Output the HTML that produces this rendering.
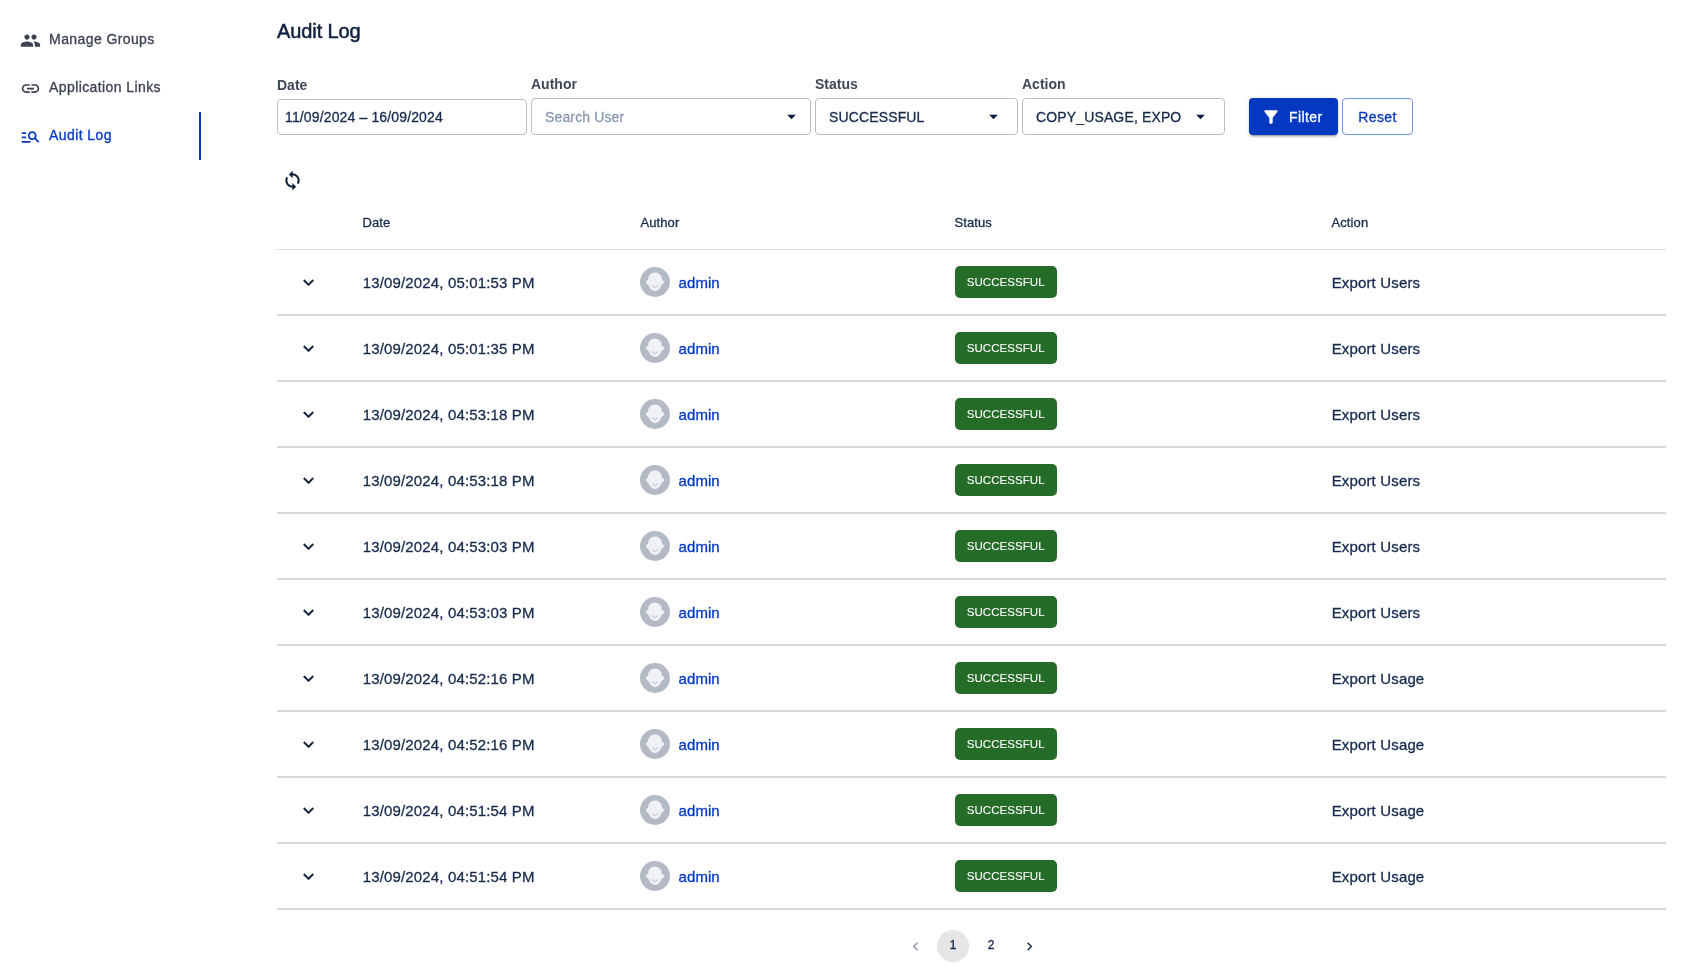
<!DOCTYPE html>
<html lang="en">
<head>
<meta charset="utf-8">
<title>Audit Log</title>
<meta name="viewport" content="width=1690, initial-scale=1">
<style>
*{box-sizing:border-box;margin:0;padding:0}
html,body{width:1690px;height:975px;overflow:hidden;background:#fff}
body{position:relative;will-change:transform;-webkit-text-stroke:.3px currentColor;font-family:"Liberation Sans",Arial,Helvetica,sans-serif;color:#172b4d;font-size:14px;-webkit-font-smoothing:antialiased}
svg{display:block;fill:currentColor}
button{font-family:inherit;border:0;background:none;color:inherit;cursor:pointer}
a{text-decoration:none;cursor:pointer}

/* sidebar */
.side{position:absolute;left:0;top:16px;width:201px;height:144px}
.side ul{list-style:none}
.side li{position:relative;height:48px;display:flex;align-items:center;padding-left:19.5px;font-size:14px;letter-spacing:.4px;color:#3a4250;white-space:nowrap}
.side li svg{width:21px;height:21px;margin-right:8.6px;flex:none;position:relative;top:.5px}
.side li span{position:relative;top:-1px;-webkit-text-stroke:.3px currentColor}
.side li.on{color:#0438c0}
.side li.on::after{content:"";position:absolute;right:0;top:0;width:2px;height:48px;background:#0438c0}

/* title */
h1{position:absolute;left:277px;top:18px;font-size:20px;line-height:26px;font-weight:400;color:#0f2040;white-space:nowrap;-webkit-text-stroke:.5px currentColor;letter-spacing:-.1px}

/* filters */
.f{position:absolute}
.f label{position:absolute;left:0;-webkit-text-stroke:0;font-weight:700;font-size:14px;line-height:16px;color:#3f4759;white-space:nowrap}
.box{position:absolute;left:0;border:1px solid #bcbcbc;border-radius:4px;background:#fff;display:flex;align-items:center;font-size:14px;letter-spacing:.14px;color:#172b4d;white-space:nowrap;overflow:hidden}
.box .arr{position:absolute;width:21px;height:21px;top:50%;margin-top:-10.5px;color:#0b1c3c}
.ph{color:#8a99b0}
.btn{position:absolute;top:98px;height:37px;border-radius:4px;font-size:14px;letter-spacing:.4px;-webkit-text-stroke:.3px currentColor;display:flex;align-items:center;white-space:nowrap}
.btn.pri{left:1249px;width:89px;background:#0438c0;color:#fff;padding-left:12px;box-shadow:0 3px 1px -2px rgba(0,0,0,.2),0 2px 2px 0 rgba(0,0,0,.14),0 1px 5px 0 rgba(0,0,0,.12)}
.btn.pri svg{width:20px;height:20px;margin:0 7.7px 0 .3px}
.btn.sec{left:1342px;width:71px;border:1px solid #7094df;color:#0438c0;justify-content:center}

.refresh{position:absolute;left:282.1px;top:170.1px;width:21px;height:21px;color:#0b1a38}
.refresh svg{width:21px;height:21px;stroke:currentColor;stroke-width:.3px}

/* table */
table{position:absolute;left:277px;top:195px;width:1389px;border-collapse:separate;border-spacing:0;table-layout:fixed}
th{height:55px;border-bottom:1px solid #dcdcdc;text-align:left;font-weight:400;font-size:13px;letter-spacing:.12px;color:#172b4d;padding:0 16px 0 15.4px;vertical-align:middle}
td{height:66px;border-bottom:2px solid #d9d9d9;padding:0 16px 0 15.7px;font-size:15px;letter-spacing:.15px;color:#172b4d;vertical-align:middle;white-space:nowrap}
.exp{width:30px;height:30px;display:flex;align-items:center;justify-content:center;margin-left:0}
.exp svg{width:21px;height:21px;position:relative;top:.4px;left:.9px;color:#0b1a38;stroke:currentColor;stroke-width:.3px}
.user{display:flex;align-items:center}
.av{width:30px;height:30px;margin:0 9px 0 -1px;flex:none}
.uname{color:#0438c0;letter-spacing:.05px;margin-left:-.1px}
.chip{display:inline-flex;align-items:center;justify-content:center;width:102px;height:32px;border-radius:5px;background:#266c29;color:#fff;font-size:11.5px;letter-spacing:.06px;-webkit-text-stroke:.1px currentColor}

/* pagination */
.pager{position:absolute;left:896px;top:930px;height:32px}
.pager ul{list-style:none;display:flex}
.pager li{width:32px;height:32px;margin:0 3px;border-radius:16px;display:flex;align-items:center;justify-content:center;font-size:12px;line-height:14px;color:#172b4d;-webkit-text-stroke:.35px currentColor}
.pager li.n{padding-bottom:3px}
.pager li.sel{background:#e5e5e5}
.pager li svg{width:17px;height:17px;position:relative;left:.1px;top:.8px}
.pager li.dis{opacity:.5}

</style>
</head>
<body>
<nav class="side" aria-label="Administration">
<ul>
<li><svg viewBox="0 0 24 24"><path d="M16 11c1.66 0 2.990-1.340 2.990-3S17.660 5 16 5c-1.660 0-3 1.340-3 3s1.340 3 3 3zm-8 0c1.660 0 2.990-1.340 2.990-3S9.660 5 8 5C6.340 5 5 6.340 5 8s1.340 3 3 3zm0 2c-2.330 0-7 1.170-7 3.500V19h14v-2.500c0-2.330-4.670-3.500-7-3.500zm8 0c-.29 0-.62.020-.97.050 1.160.840 1.970 1.970 1.970 3.450V19h6v-2.500c0-2.330-4.670-3.500-7-3.500z"/></svg><span>Manage Groups</span></li>
<li><svg viewBox="0 0 24 24"><path d="M3.900 12c0-1.710 1.390-3.100 3.100-3.100h4V7H7c-2.760 0-5 2.240-5 5s2.240 5 5 5h4v-1.900H7c-1.710 0-3.100-1.390-3.100-3.100zM8 13h8v-2H8v2zm9-6h-4v1.900h4c1.710 0 3.100 1.390 3.100 3.100s-1.390 3.100-3.100 3.100h-4V17h4c2.760 0 5-2.240 5-5s-2.240-5-5-5z"/></svg><span>Application Links</span></li>
<li class="on"><svg viewBox="0 0 24 24"><path d="M7 9H2V7h5v2zm0 3H2v2h5v-2zm13.590 7-3.830-3.830c-.8.520-1.740.830-2.760.830-2.760 0-5-2.240-5-5s2.240-5 5-5 5 2.240 5 5c0 1.020-.31 1.960-.83 2.750L22 17.590 20.590 19zM17 11c0-1.650-1.350-3-3-3s-3 1.350-3 3 1.350 3 3 3 3-1.350 3-3zM2 19h10v-2H2v2z"/></svg><span>Audit Log</span></li>
</ul>
</nav>
<main>
<h1>Audit Log</h1>
<section class="filters">
<div class="f" style="left:277px;top:0">
<label style="top:77px">Date</label>
<div class="box" style="top:99px;width:250px;height:36px;padding-left:7px">11/09/2024 – 16/09/2024</div>
</div>
<div class="f" style="left:531px;top:0">
<label style="top:76px">Author</label>
<div class="box" style="top:98px;width:280px;height:37px;padding-left:13px"><span class="ph">Search User</span><svg class="arr" style="right:8.3px" viewBox="0 0 24 24"><path d="M7 10l5 5 5-5z"/></svg></div>
</div>
<div class="f" style="left:815px;top:0">
<label style="top:76px">Status</label>
<div class="box" style="top:98px;width:203px;height:37px;padding-left:13px">SUCCESSFUL<svg class="arr" style="right:13.3px" viewBox="0 0 24 24"><path d="M7 10l5 5 5-5z"/></svg></div>
</div>
<div class="f" style="left:1022px;top:0">
<label style="top:76px">Action</label>
<div class="box" style="top:98px;width:203px;height:37px;padding-left:13px">COPY_USAGE, EXPO<svg class="arr" style="right:13.3px" viewBox="0 0 24 24"><path d="M7 10l5 5 5-5z"/></svg></div>
</div>
<button class="btn pri"><svg viewBox="0 0 24 24"><path d="M4.250 5.610C6.270 8.200 10 13 10 13v6c0 .550.450 1 1 1h2c.550 0 1-.450 1-1v-6s3.720-4.800 5.740-7.390c.510-.660.040-1.610-.790-1.610H5.040c-.830 0-1.300.950-.790 1.610z"/></svg>Filter</button>
<button class="btn sec">Reset</button>
</section>
<button class="refresh" aria-label="Refresh"><svg viewBox="0 0 24 24"><path d="M12 4V1L8 5l4 4V6c3.310 0 6 2.690 6 6 0 1.010-.250 1.970-.700 2.800l1.460 1.460C19.540 15.030 20 13.570 20 12c0-4.420-3.580-8-8-8zm0 14c-3.310 0-6-2.690-6-6 0-1.010.250-1.970.700-2.800L5.240 7.740C4.460 8.970 4 10.430 4 12c0 4.420 3.580 8 8 8v3l4-4-4-4v3z"/></svg></button>
<table>
<colgroup><col style="width:70px"><col style="width:278px"><col style="width:314px"><col style="width:377px"><col style="width:350px"></colgroup>
<thead><tr><th></th><th>Date</th><th>Author</th><th>Status</th><th>Action</th></tr></thead>
<tbody>
<tr>
<td class="c-exp"><button class="exp" aria-label="expand row"><svg viewBox="0 0 24 24"><path d="M7.41 8.59 12 13.17l4.59-4.58L18 10l-6 6-6-6 1.41-1.41z"/></svg></button></td>
<td class="c-date">13/09/2024, 05:01:53 PM</td>
<td class="c-auth"><span class="user"><svg class="av" viewBox="0 0 30 30"><circle cx="15" cy="15" r="15" fill="#b3bac5"/><path d="M15 5.500C11.200 5.500 8.200 8.400 8.050 12.300C8 12.900 7.700 13.200 7.100 13.400C6.200 13.700 5.700 14.400 5.750 15.100C5.850 16.200 6.700 17.200 7.800 17.600C8.300 17.800 8.600 18.100 8.800 18.600C9.700 22 12.400 24.100 15 24.100C17.600 24.100 20.300 22 21.200 18.600C21.400 18.100 21.700 17.800 22.200 17.600C23.300 17.200 24.150 16.200 24.250 15.100C24.300 14.400 23.800 13.700 22.900 13.400C22.300 13.200 22 12.900 21.950 12.300C21.800 8.400 18.800 5.500 15 5.500Z" fill="#f0f1f5"/><path d="M12.600 18.700C13.100 20 14 20.450 15 20.450C16 20.450 16.900 20 17.400 18.700" fill="none" stroke="#b3bac5" stroke-width="1" stroke-linecap="round"/></svg><a class="uname">admin</a></span></td>
<td class="c-stat"><span class="chip">SUCCESSFUL</span></td>
<td class="c-act">Export Users</td>
</tr>
<tr>
<td class="c-exp"><button class="exp" aria-label="expand row"><svg viewBox="0 0 24 24"><path d="M7.41 8.59 12 13.17l4.59-4.58L18 10l-6 6-6-6 1.41-1.41z"/></svg></button></td>
<td class="c-date">13/09/2024, 05:01:35 PM</td>
<td class="c-auth"><span class="user"><svg class="av" viewBox="0 0 30 30"><circle cx="15" cy="15" r="15" fill="#b3bac5"/><path d="M15 5.500C11.200 5.500 8.200 8.400 8.050 12.300C8 12.900 7.700 13.200 7.100 13.400C6.200 13.700 5.700 14.400 5.750 15.100C5.850 16.200 6.700 17.200 7.800 17.600C8.300 17.800 8.600 18.100 8.800 18.600C9.700 22 12.400 24.100 15 24.100C17.600 24.100 20.300 22 21.200 18.600C21.400 18.100 21.700 17.800 22.200 17.600C23.300 17.200 24.150 16.200 24.250 15.100C24.300 14.400 23.800 13.700 22.900 13.400C22.300 13.200 22 12.900 21.950 12.300C21.800 8.400 18.800 5.500 15 5.500Z" fill="#f0f1f5"/><path d="M12.600 18.700C13.100 20 14 20.450 15 20.450C16 20.450 16.900 20 17.400 18.700" fill="none" stroke="#b3bac5" stroke-width="1" stroke-linecap="round"/></svg><a class="uname">admin</a></span></td>
<td class="c-stat"><span class="chip">SUCCESSFUL</span></td>
<td class="c-act">Export Users</td>
</tr>
<tr>
<td class="c-exp"><button class="exp" aria-label="expand row"><svg viewBox="0 0 24 24"><path d="M7.41 8.59 12 13.17l4.59-4.58L18 10l-6 6-6-6 1.41-1.41z"/></svg></button></td>
<td class="c-date">13/09/2024, 04:53:18 PM</td>
<td class="c-auth"><span class="user"><svg class="av" viewBox="0 0 30 30"><circle cx="15" cy="15" r="15" fill="#b3bac5"/><path d="M15 5.500C11.200 5.500 8.200 8.400 8.050 12.300C8 12.900 7.700 13.200 7.100 13.400C6.200 13.700 5.700 14.400 5.750 15.100C5.850 16.200 6.700 17.200 7.800 17.600C8.300 17.800 8.600 18.100 8.800 18.600C9.700 22 12.400 24.100 15 24.100C17.600 24.100 20.300 22 21.200 18.600C21.400 18.100 21.700 17.800 22.200 17.600C23.300 17.200 24.150 16.200 24.250 15.100C24.300 14.400 23.800 13.700 22.900 13.400C22.300 13.200 22 12.900 21.950 12.300C21.800 8.400 18.800 5.500 15 5.500Z" fill="#f0f1f5"/><path d="M12.600 18.700C13.100 20 14 20.450 15 20.450C16 20.450 16.900 20 17.400 18.700" fill="none" stroke="#b3bac5" stroke-width="1" stroke-linecap="round"/></svg><a class="uname">admin</a></span></td>
<td class="c-stat"><span class="chip">SUCCESSFUL</span></td>
<td class="c-act">Export Users</td>
</tr>
<tr>
<td class="c-exp"><button class="exp" aria-label="expand row"><svg viewBox="0 0 24 24"><path d="M7.41 8.59 12 13.17l4.59-4.58L18 10l-6 6-6-6 1.41-1.41z"/></svg></button></td>
<td class="c-date">13/09/2024, 04:53:18 PM</td>
<td class="c-auth"><span class="user"><svg class="av" viewBox="0 0 30 30"><circle cx="15" cy="15" r="15" fill="#b3bac5"/><path d="M15 5.500C11.200 5.500 8.200 8.400 8.050 12.300C8 12.900 7.700 13.200 7.100 13.400C6.200 13.700 5.700 14.400 5.750 15.100C5.850 16.200 6.700 17.200 7.800 17.600C8.300 17.800 8.600 18.100 8.800 18.600C9.700 22 12.400 24.100 15 24.100C17.600 24.100 20.300 22 21.200 18.600C21.400 18.100 21.700 17.800 22.200 17.600C23.300 17.200 24.150 16.200 24.250 15.100C24.300 14.400 23.800 13.700 22.900 13.400C22.300 13.200 22 12.900 21.950 12.300C21.800 8.400 18.800 5.500 15 5.500Z" fill="#f0f1f5"/><path d="M12.600 18.700C13.100 20 14 20.450 15 20.450C16 20.450 16.900 20 17.400 18.700" fill="none" stroke="#b3bac5" stroke-width="1" stroke-linecap="round"/></svg><a class="uname">admin</a></span></td>
<td class="c-stat"><span class="chip">SUCCESSFUL</span></td>
<td class="c-act">Export Users</td>
</tr>
<tr>
<td class="c-exp"><button class="exp" aria-label="expand row"><svg viewBox="0 0 24 24"><path d="M7.41 8.59 12 13.17l4.59-4.58L18 10l-6 6-6-6 1.41-1.41z"/></svg></button></td>
<td class="c-date">13/09/2024, 04:53:03 PM</td>
<td class="c-auth"><span class="user"><svg class="av" viewBox="0 0 30 30"><circle cx="15" cy="15" r="15" fill="#b3bac5"/><path d="M15 5.500C11.200 5.500 8.200 8.400 8.050 12.300C8 12.900 7.700 13.200 7.100 13.400C6.200 13.700 5.700 14.400 5.750 15.100C5.850 16.200 6.700 17.200 7.800 17.600C8.300 17.800 8.600 18.100 8.800 18.600C9.700 22 12.400 24.100 15 24.100C17.600 24.100 20.300 22 21.200 18.600C21.400 18.100 21.700 17.800 22.200 17.600C23.300 17.200 24.150 16.200 24.250 15.100C24.300 14.400 23.800 13.700 22.900 13.400C22.300 13.200 22 12.900 21.950 12.300C21.800 8.400 18.800 5.500 15 5.500Z" fill="#f0f1f5"/><path d="M12.600 18.700C13.100 20 14 20.450 15 20.450C16 20.450 16.900 20 17.400 18.700" fill="none" stroke="#b3bac5" stroke-width="1" stroke-linecap="round"/></svg><a class="uname">admin</a></span></td>
<td class="c-stat"><span class="chip">SUCCESSFUL</span></td>
<td class="c-act">Export Users</td>
</tr>
<tr>
<td class="c-exp"><button class="exp" aria-label="expand row"><svg viewBox="0 0 24 24"><path d="M7.41 8.59 12 13.17l4.59-4.58L18 10l-6 6-6-6 1.41-1.41z"/></svg></button></td>
<td class="c-date">13/09/2024, 04:53:03 PM</td>
<td class="c-auth"><span class="user"><svg class="av" viewBox="0 0 30 30"><circle cx="15" cy="15" r="15" fill="#b3bac5"/><path d="M15 5.500C11.200 5.500 8.200 8.400 8.050 12.300C8 12.900 7.700 13.200 7.100 13.400C6.200 13.700 5.700 14.400 5.750 15.100C5.850 16.200 6.700 17.200 7.800 17.600C8.300 17.800 8.600 18.100 8.800 18.600C9.700 22 12.400 24.100 15 24.100C17.600 24.100 20.300 22 21.200 18.600C21.400 18.100 21.700 17.800 22.200 17.600C23.300 17.200 24.150 16.200 24.250 15.100C24.300 14.400 23.800 13.700 22.900 13.400C22.300 13.200 22 12.900 21.950 12.300C21.800 8.400 18.800 5.500 15 5.500Z" fill="#f0f1f5"/><path d="M12.600 18.700C13.100 20 14 20.450 15 20.450C16 20.450 16.900 20 17.400 18.700" fill="none" stroke="#b3bac5" stroke-width="1" stroke-linecap="round"/></svg><a class="uname">admin</a></span></td>
<td class="c-stat"><span class="chip">SUCCESSFUL</span></td>
<td class="c-act">Export Users</td>
</tr>
<tr>
<td class="c-exp"><button class="exp" aria-label="expand row"><svg viewBox="0 0 24 24"><path d="M7.41 8.59 12 13.17l4.59-4.58L18 10l-6 6-6-6 1.41-1.41z"/></svg></button></td>
<td class="c-date">13/09/2024, 04:52:16 PM</td>
<td class="c-auth"><span class="user"><svg class="av" viewBox="0 0 30 30"><circle cx="15" cy="15" r="15" fill="#b3bac5"/><path d="M15 5.500C11.200 5.500 8.200 8.400 8.050 12.300C8 12.900 7.700 13.200 7.100 13.400C6.200 13.700 5.700 14.400 5.750 15.100C5.850 16.200 6.700 17.200 7.800 17.600C8.300 17.800 8.600 18.100 8.800 18.600C9.700 22 12.400 24.100 15 24.100C17.600 24.100 20.300 22 21.200 18.600C21.400 18.100 21.700 17.800 22.200 17.600C23.300 17.200 24.150 16.200 24.250 15.100C24.300 14.400 23.800 13.700 22.900 13.400C22.300 13.200 22 12.900 21.950 12.300C21.800 8.400 18.800 5.500 15 5.500Z" fill="#f0f1f5"/><path d="M12.600 18.700C13.100 20 14 20.450 15 20.450C16 20.450 16.900 20 17.400 18.700" fill="none" stroke="#b3bac5" stroke-width="1" stroke-linecap="round"/></svg><a class="uname">admin</a></span></td>
<td class="c-stat"><span class="chip">SUCCESSFUL</span></td>
<td class="c-act">Export Usage</td>
</tr>
<tr>
<td class="c-exp"><button class="exp" aria-label="expand row"><svg viewBox="0 0 24 24"><path d="M7.41 8.59 12 13.17l4.59-4.58L18 10l-6 6-6-6 1.41-1.41z"/></svg></button></td>
<td class="c-date">13/09/2024, 04:52:16 PM</td>
<td class="c-auth"><span class="user"><svg class="av" viewBox="0 0 30 30"><circle cx="15" cy="15" r="15" fill="#b3bac5"/><path d="M15 5.500C11.200 5.500 8.200 8.400 8.050 12.300C8 12.900 7.700 13.200 7.100 13.400C6.200 13.700 5.700 14.400 5.750 15.100C5.850 16.200 6.700 17.200 7.800 17.600C8.300 17.800 8.600 18.100 8.800 18.600C9.700 22 12.400 24.100 15 24.100C17.600 24.100 20.300 22 21.200 18.600C21.400 18.100 21.700 17.800 22.200 17.600C23.300 17.200 24.150 16.200 24.250 15.100C24.300 14.400 23.800 13.700 22.900 13.400C22.300 13.200 22 12.900 21.950 12.300C21.800 8.400 18.800 5.500 15 5.500Z" fill="#f0f1f5"/><path d="M12.600 18.700C13.100 20 14 20.450 15 20.450C16 20.450 16.900 20 17.400 18.700" fill="none" stroke="#b3bac5" stroke-width="1" stroke-linecap="round"/></svg><a class="uname">admin</a></span></td>
<td class="c-stat"><span class="chip">SUCCESSFUL</span></td>
<td class="c-act">Export Usage</td>
</tr>
<tr>
<td class="c-exp"><button class="exp" aria-label="expand row"><svg viewBox="0 0 24 24"><path d="M7.41 8.59 12 13.17l4.59-4.58L18 10l-6 6-6-6 1.41-1.41z"/></svg></button></td>
<td class="c-date">13/09/2024, 04:51:54 PM</td>
<td class="c-auth"><span class="user"><svg class="av" viewBox="0 0 30 30"><circle cx="15" cy="15" r="15" fill="#b3bac5"/><path d="M15 5.500C11.200 5.500 8.200 8.400 8.050 12.300C8 12.900 7.700 13.200 7.100 13.400C6.200 13.700 5.700 14.400 5.750 15.100C5.850 16.200 6.700 17.200 7.800 17.600C8.300 17.800 8.600 18.100 8.800 18.600C9.700 22 12.400 24.100 15 24.100C17.600 24.100 20.300 22 21.200 18.600C21.400 18.100 21.700 17.800 22.200 17.600C23.300 17.200 24.150 16.200 24.250 15.100C24.300 14.400 23.800 13.700 22.900 13.400C22.300 13.200 22 12.900 21.950 12.300C21.800 8.400 18.800 5.500 15 5.500Z" fill="#f0f1f5"/><path d="M12.600 18.700C13.100 20 14 20.450 15 20.450C16 20.450 16.900 20 17.400 18.700" fill="none" stroke="#b3bac5" stroke-width="1" stroke-linecap="round"/></svg><a class="uname">admin</a></span></td>
<td class="c-stat"><span class="chip">SUCCESSFUL</span></td>
<td class="c-act">Export Usage</td>
</tr>
<tr>
<td class="c-exp"><button class="exp" aria-label="expand row"><svg viewBox="0 0 24 24"><path d="M7.41 8.59 12 13.17l4.59-4.58L18 10l-6 6-6-6 1.41-1.41z"/></svg></button></td>
<td class="c-date">13/09/2024, 04:51:54 PM</td>
<td class="c-auth"><span class="user"><svg class="av" viewBox="0 0 30 30"><circle cx="15" cy="15" r="15" fill="#b3bac5"/><path d="M15 5.500C11.200 5.500 8.200 8.400 8.050 12.300C8 12.900 7.700 13.200 7.100 13.400C6.200 13.700 5.700 14.400 5.750 15.100C5.850 16.200 6.700 17.200 7.800 17.600C8.300 17.800 8.600 18.100 8.800 18.600C9.700 22 12.400 24.100 15 24.100C17.600 24.100 20.300 22 21.200 18.600C21.400 18.100 21.700 17.800 22.200 17.600C23.300 17.200 24.150 16.200 24.250 15.100C24.300 14.400 23.800 13.700 22.900 13.400C22.300 13.200 22 12.900 21.950 12.300C21.800 8.400 18.800 5.500 15 5.500Z" fill="#f0f1f5"/><path d="M12.600 18.700C13.100 20 14 20.450 15 20.450C16 20.450 16.900 20 17.400 18.700" fill="none" stroke="#b3bac5" stroke-width="1" stroke-linecap="round"/></svg><a class="uname">admin</a></span></td>
<td class="c-stat"><span class="chip">SUCCESSFUL</span></td>
<td class="c-act">Export Usage</td>
</tr>
</tbody>
</table>
<nav class="pager" aria-label="pagination">
<ul>
<li class="dis"><svg viewBox="0 0 24 24"><path d="M15.410 7.410 14 6l-6 6 6 6 1.410-1.410L10.830 12z"/></svg></li>
<li class="sel n">1</li>
<li class="n">2</li>
<li><svg viewBox="0 0 24 24"><path d="M10 6 8.590 7.410 13.170 12l-4.580 4.590L10 18l6-6z"/></svg></li>
</ul>
</nav>
</main>
</body>
</html>
